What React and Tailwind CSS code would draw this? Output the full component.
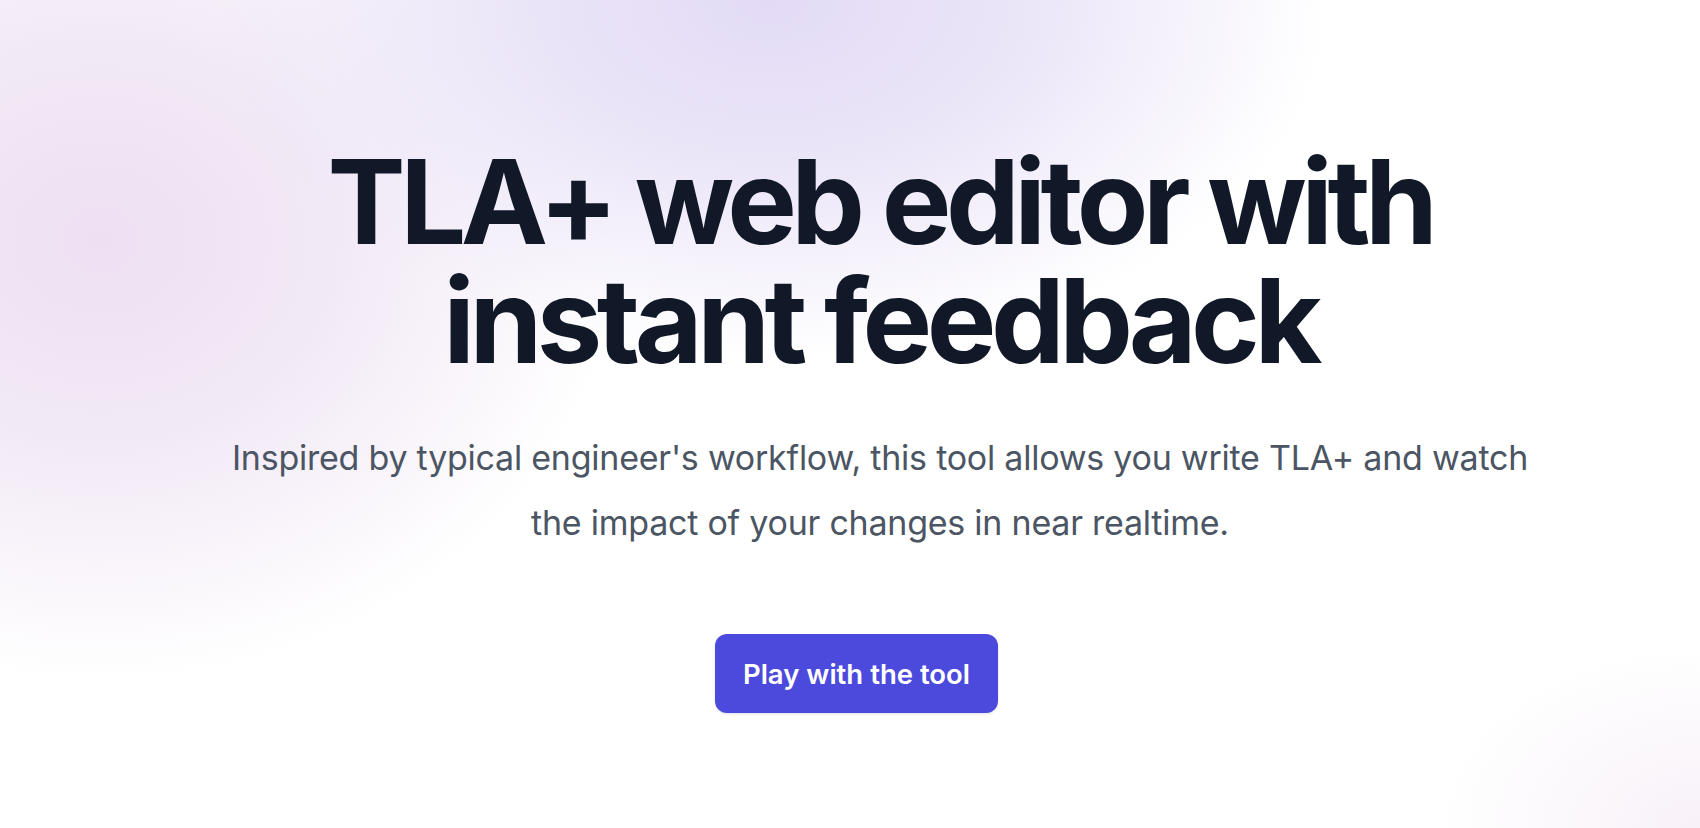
const Hero = () => (
  <div className="min-h-screen w-full bg-white bg-[image:radial-gradient(ellipse_560px_360px_at_770px_0px,#e3dbf6_0%,#ebe5f8_45%,rgba(255,255,255,0)_100%),radial-gradient(ellipse_520px_440px_at_100px_240px,#eee0f2_0%,#f2e9f6_45%,rgba(255,255,255,0)_100%),radial-gradient(ellipse_260px_180px_at_1700px_828px,#f8f1f8_0%,rgba(255,255,255,0)_100%)] font-['Inter',sans-serif]">
    <div className="flex flex-col items-center pl-[60px] pt-[142px] text-center">
      <h1 className="w-[1324px] text-[117px] leading-[119px] font-bold tracking-[-0.047em] text-[#111827]">
        TLA+ web editor with instant feedback
      </h1>
      <p className="mt-[45px] w-[1324px] text-[34px] leading-[65px] tracking-[-0.007em] text-[#4b5563]">
        Inspired by typical engineer's workflow, this tool allows you write
        TLA+ and watch the impact of your changes in near realtime.
      </p>
      <div className="mt-[79px] flex items-center justify-center gap-x-[47px]">
        <a
          href="#"
          className="rounded-[12px] bg-[#4c4add] px-[28px] py-[19.5px] text-[27.5px] leading-[40px] font-semibold text-white shadow-sm"
        >
          Play with the tool
        </a>
        <span />
      </div>
    </div>
  </div>
);

export default function App() {
  return <Hero />;
}
